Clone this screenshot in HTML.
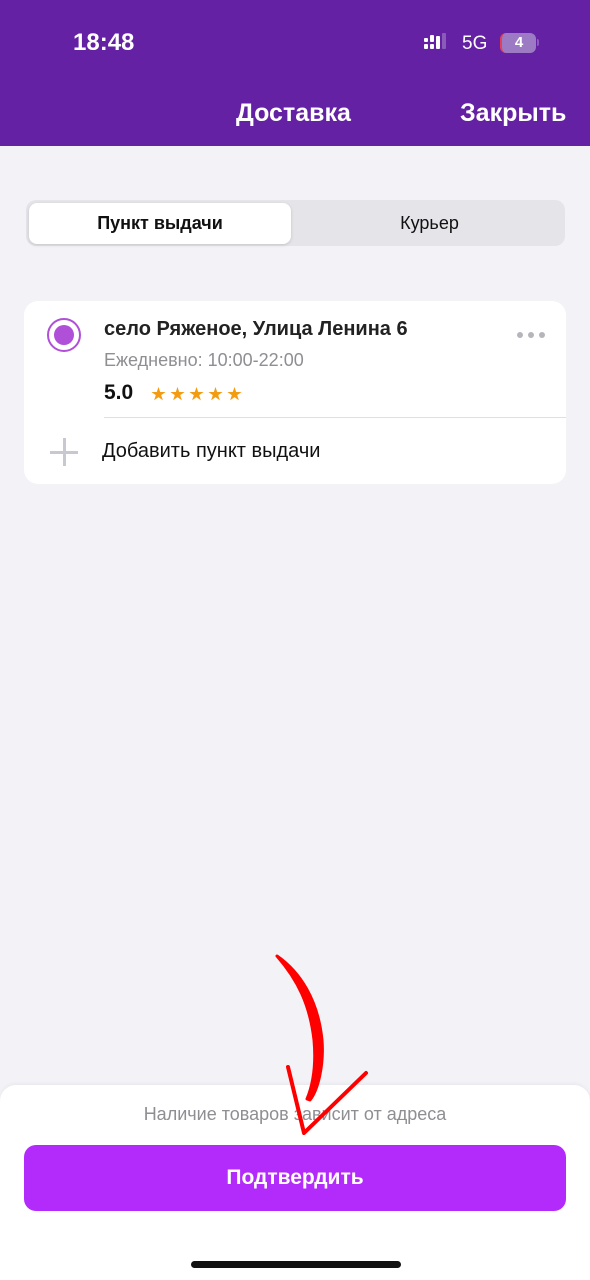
<!DOCTYPE html>
<html><head><meta charset="utf-8">
<style>
*{margin:0;padding:0;box-sizing:border-box}
body{width:590px;height:1280px;background:#f2f2f7;font-family:"Liberation Sans","Noto Sans CJK SC",sans-serif;position:relative;overflow:hidden}
.hdr{position:absolute;left:0;top:0;width:590px;height:146px;background:#6421a3;color:#fff}
.abs{position:absolute}
.seg{position:absolute;left:26px;top:200px;width:539px;height:46px;background:#e4e4e9;border-radius:10px}
.sel{position:absolute;left:3px;top:3px;width:262px;height:41px;background:#fff;border-radius:8px;box-shadow:0 1px 3px rgba(0,0,0,.15)}
.card{position:absolute;left:24px;top:301px;width:542px;height:183px;background:#fff;border-radius:14px}
.sheet{position:absolute;left:0;top:1085px;width:590px;height:195px;background:#fff;border-radius:16px 16px 0 0;box-shadow:0 -1px 4px rgba(0,0,0,.05)}
.btn{position:absolute;left:24px;top:1145px;width:542px;height:66px;background:#b32bfb;border-radius:12px;color:#fff;font-size:21px;font-weight:bold;text-align:center;line-height:66px}
</style></head><body>
<div class="hdr">
  <div class="abs" style="left:73px;top:29px;font-size:24px;font-weight:bold">18:48</div>
  <div class="abs" style="left:424px;top:38px;width:4px;height:4px;background:#fff;border-radius:1px"></div>
  <div class="abs" style="left:430px;top:35px;width:4px;height:7px;background:#fff;border-radius:1px"></div>
  <div class="abs" style="left:424px;top:44px;width:4px;height:5px;background:#fff;border-radius:1px"></div>
  <div class="abs" style="left:430px;top:44px;width:4px;height:5px;background:#fff;border-radius:1px"></div>
  <div class="abs" style="left:436px;top:36px;width:4px;height:13px;background:#fff;border-radius:1px"></div>
  <div class="abs" style="left:442px;top:33px;width:4px;height:16px;background:#8a5cb8;border-radius:1px"></div>
  <div class="abs" style="left:462px;top:33px;font-size:19px">5G</div>
  <div class="abs" style="left:500px;top:33px;width:36px;height:20px;background:#9d7bc4;border-radius:6px;border-left:2px solid #e0405a;font-size:15px;font-weight:bold;text-align:center;line-height:20px">4</div>
  <div class="abs" style="left:537px;top:39px;width:2px;height:7px;background:#8a5cb8;border-radius:0 2px 2px 0"></div>
  <div class="abs" style="left:236px;top:99px;font-size:25px;font-weight:bold">Доставка</div>
  <div class="abs" style="left:460px;top:99px;font-size:25px;font-weight:bold">Закрыть</div>
</div>
<div class="seg"><div class="sel"></div>
  <div class="abs" style="left:0;width:268px;top:13px;text-align:center;font-size:18px;font-weight:bold;color:#111">Пункт выдачи</div>
  <div class="abs" style="left:268px;width:271px;top:13px;text-align:center;font-size:18px;color:#111">Курьер</div>
</div>
<div class="card">
  <div class="abs" style="left:23px;top:17px;width:34px;height:34px;border:2.5px solid #b04fd8;border-radius:50%"></div>
  <div class="abs" style="left:30px;top:24px;width:20px;height:20px;background:#b04fd8;border-radius:50%"></div>
  <div class="abs" style="left:80px;top:17px;font-size:20px;font-weight:bold;color:#222">село Ряженое, Улица Ленина 6</div>
  <div class="abs" style="left:493px;top:31px;width:6px;height:6px;background:#b5b5bb;border-radius:50%;box-shadow:11px 0 0 #b5b5bb,22px 0 0 #b5b5bb"></div>
  <div class="abs" style="left:80px;top:49px;font-size:18px;color:#8e8e93">Ежедневно: 10:00-22:00</div>
  <div class="abs" style="left:80px;top:80px;font-size:21px;font-weight:bold;color:#111">5.0</div>
  <div class="abs" style="left:127px;top:82px;font-size:15px;color:#f39c12;letter-spacing:4px">★★★★★</div>
  <div class="abs" style="left:80px;top:116px;width:462px;height:1px;background:#e0e0e4"></div>
  <div class="abs" style="left:26px;top:150px;width:28px;height:3px;background:#c8c8d0"></div>
  <div class="abs" style="left:39px;top:137px;width:3px;height:28px;background:#c8c8d0"></div>
  <div class="abs" style="left:78px;top:139px;font-size:20px;color:#111">Добавить пункт выдачи</div>
</div>
<div class="sheet">
  <div class="abs" style="left:0;width:590px;top:19px;text-align:center;font-size:18px;color:#8e8e93">Наличие товаров зависит от адреса</div>
</div>
<div class="btn">Подтвердить</div>
<div class="abs" style="left:191px;top:1261px;width:210px;height:7px;background:#111;border-radius:4px"></div>
<svg class="abs" style="left:0;top:0" width="590" height="1280">
  <path d="M277 956 C300 972 318 1000 322 1040 C324 1065 318 1090 310 1100 L307 1099 C314 1082 316 1062 314 1040 C310 1005 298 980 277 956 Z" fill="#f00" stroke="#f00" stroke-width="3" stroke-linejoin="round"/>
  <path d="M288 1067 L304 1133 L366 1073" fill="none" stroke="#f00" stroke-width="4" stroke-linecap="round" stroke-linejoin="round"/>
</svg>
</body></html>
